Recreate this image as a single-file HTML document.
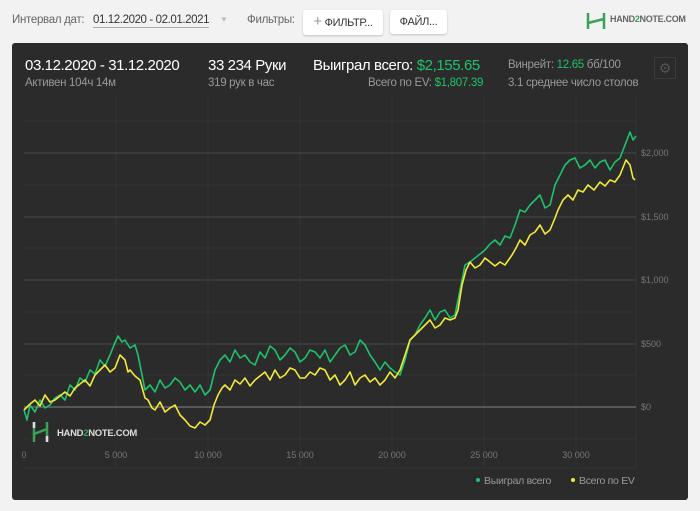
<!DOCTYPE html>
<html><head><meta charset="utf-8"><style>
body{margin:0;width:700px;height:511px;background:#f2f2f2;font-family:"Liberation Sans","DejaVu Sans",sans-serif;position:relative;overflow:hidden}
.a{position:absolute;white-space:nowrap}
.btn{position:absolute;background:#fff;border-radius:3px;box-shadow:0 1px 2px rgba(0,0,0,.2);font-size:11px;color:#333;line-height:24px;text-align:center;letter-spacing:-.3px}
.panel{position:absolute;left:12px;top:43px;width:676px;height:457px;background:#2b2b2b;border-radius:3px}
.w{color:#fff;letter-spacing:-.4px}.g{color:#999;letter-spacing:-.3px}.gr{color:#1fc26c}
</style></head><body>
<div class="a" style="left:12px;top:14px;font-size:11.5px;color:#666;letter-spacing:-.3px">Интервал дат:</div>
<div class="a" style="left:93px;top:14px;font-size:11.5px;color:#333;border-bottom:1px solid #aaa;padding-bottom:1px;letter-spacing:-.4px">01.12.2020 - 02.01.2021</div>
<div class="a" style="left:220px;top:15px;font-size:8px;color:#bbb">▼</div>
<div class="a" style="left:247px;top:14px;font-size:11.5px;color:#666;letter-spacing:-.3px">Фильтры:</div>
<div class="btn" style="left:303px;top:10px;width:80px"><span style="color:#999;font-size:15px">+</span> ФИЛЬТР...</div>
<div class="btn" style="left:390px;top:10px;width:57px">ФАЙЛ...</div>
<svg class="a" style="left:586px;top:11px" width="20" height="20"><path d="M2 2v16M18 2v16M2 12l16-4" stroke="#3aa15a" stroke-width="2.5" fill="none"/></svg>
<div class="a" style="left:610px;top:14px;font-size:9px;font-weight:bold;color:#666;letter-spacing:-.3px">HAND<span style="color:#3aa15a">2</span>NOTE.COM</div>
<div class="panel"></div>
<div class="a w" style="left:25px;top:57px;font-size:15px">03.12.2020 - 31.12.2020</div>
<div class="a g" style="left:25px;top:77px;font-size:11.5px">Активен 104ч 14м</div>
<div class="a w" style="left:208px;top:57px;font-size:15px">33 234 Руки</div>
<div class="a g" style="left:208px;top:77px;font-size:11.5px">319 рук в час</div>
<div class="a w" style="left:313px;top:57px;font-size:15px">Выиграл всего: <span class="gr">$2,155.65</span></div>
<div class="a g" style="left:368px;top:77px;font-size:11.5px">Всего по EV: <span class="gr">$1,807.39</span></div>
<div class="a g" style="left:508px;top:59px;font-size:11.5px">Винрейт: <span class="gr">12.65</span> бб/100</div>
<div class="a g" style="left:508px;top:77px;font-size:11.5px">3.1 среднее число столов</div>
<div class="a" style="left:654px;top:57px;width:20px;height:20px;border:1px solid #3c3c3c;border-radius:2px;color:#555;font-size:14px;text-align:center;line-height:20px">⚙</div>
<svg class="a" style="left:0;top:0" width="700" height="511">
<g stroke="#333" stroke-width="1">
<path d="M24 121H636M24 185H636M24 248H636M24 312H636M24 375H636M24 439H636M116 95V468M208 95V468M300 95V468M392 95V468M484 95V468M576 95V468M636 95V468M24 468H636"/>
</g>
<g stroke="#484848" stroke-width="1"><path d="M24 153H636M24 217H636M24 280H636M24 344H636"/></g>
<path d="M24 407H636" stroke="#666" stroke-width="1.5"/>
<g fill="#777" font-size="9" font-family="Liberation Sans,sans-serif">
<text x="641" y="156">$2,000</text><text x="641" y="220">$1,500</text><text x="641" y="283">$1,000</text><text x="641" y="347">$500</text><text x="641" y="410">$0</text>
<text x="24" y="458" text-anchor="middle">0</text><text x="116" y="458" text-anchor="middle">5 000</text><text x="208" y="458" text-anchor="middle">10 000</text><text x="300" y="458" text-anchor="middle">15 000</text><text x="392" y="458" text-anchor="middle">20 000</text><text x="484" y="458" text-anchor="middle">25 000</text><text x="576" y="458" text-anchor="middle">30 000</text>
</g>
<polyline fill="none" stroke="#1fc26c" stroke-width="1.6" stroke-linejoin="round" points="24,410 27,420 30,405 35,412 40,400 45,408 50,405 55,398 60,395 65,400 70,385 75,390 80,378 85,382 90,370 95,374 100,360 105,366 110,355 114,345 118,336 122,342 125,340 130,348 135,345 138,355 140,365 145,390 150,385 155,392 160,380 165,388 170,385 175,378 180,382 185,390 190,385 195,392 200,385 205,395 210,390 215,370 220,360 225,355 230,362 235,350 240,358 245,355 250,362 255,365 260,352 265,358 270,346 275,350 280,360 285,355 290,348 295,352 300,362 305,358 310,350 315,352 320,358 325,350 330,362 335,355 340,348 345,345 350,355 355,352 360,340 365,345 370,355 375,362 380,370 385,362 390,368 395,372 400,375 405,360 410,340 415,335 420,325 425,318 430,310 435,320 440,312 445,310 450,318 455,315 460,290 465,265 470,262 475,258 480,254 485,250 490,244 495,240 500,245 505,236 510,238 515,225 520,210 525,212 530,205 535,200 540,195 545,208 550,205 555,185 560,175 565,165 570,160 575,158 580,168 585,165 590,160 595,168 600,162 605,160 610,170 615,162 620,158 625,145 630,132 633,140 636,136"/>
<polyline fill="none" stroke="#f2ea3a" stroke-width="1.6" stroke-linejoin="round" points="24,410 30,404 35,400 40,406 45,395 50,402 55,400 60,396 65,392 70,396 75,388 80,384 85,380 90,386 95,375 100,370 105,365 110,372 115,368 120,355 125,360 128,372 130,370 135,376 140,380 145,398 148,400 152,408 155,410 160,402 165,412 170,408 175,405 180,415 185,420 190,426 195,428 200,422 205,425 210,420 214,405 218,395 222,388 225,385 230,390 235,380 240,384 245,378 250,386 255,380 260,376 265,372 270,380 275,370 280,378 285,375 290,368 295,370 300,378 305,378 310,372 315,375 320,368 325,370 330,380 335,375 340,385 345,380 350,372 355,385 360,378 365,375 370,382 375,378 380,385 385,380 390,372 395,378 400,370 405,355 410,340 415,335 420,330 425,325 430,320 435,328 440,325 445,318 450,320 455,318 458,310 462,285 466,270 470,262 475,268 480,265 485,258 490,262 495,266 500,262 505,265 512,255 516,248 520,240 525,245 530,235 535,232 540,225 545,234 550,230 555,218 558,210 563,200 568,195 573,200 578,190 583,192 588,185 594,190 600,182 605,186 610,180 615,182 620,175 624,165 626,160 630,165 633,178 635,180"/>
<rect x="28" y="418" width="118" height="28" fill="#2b2b2b" opacity=".85"/>
<path d="M34 422v20M47 422v20M34 434l13-5" stroke="#3aa15a" stroke-width="2.5" fill="none"/>
<path d="M34 422v6M47 436v6" stroke="#ddd" stroke-width="2.5"/>
<text x="57" y="436" fill="#ddd" font-size="9.5" font-weight="bold" font-family="Liberation Sans,sans-serif" letter-spacing="-.3">HAND<tspan fill="#3aa15a">2</tspan>NOTE.COM</text>
<circle cx="478" cy="480" r="2" fill="#1fc26c"/><text x="484" y="484" fill="#999" font-size="10.5" font-family="Liberation Sans,sans-serif" letter-spacing="-.3">Выиграл всего</text>
<circle cx="573" cy="480" r="2" fill="#f2ea3a"/><text x="579" y="484" fill="#999" font-size="10.5" font-family="Liberation Sans,sans-serif" letter-spacing="-.3">Всего по EV</text>
</svg>
</body></html>
